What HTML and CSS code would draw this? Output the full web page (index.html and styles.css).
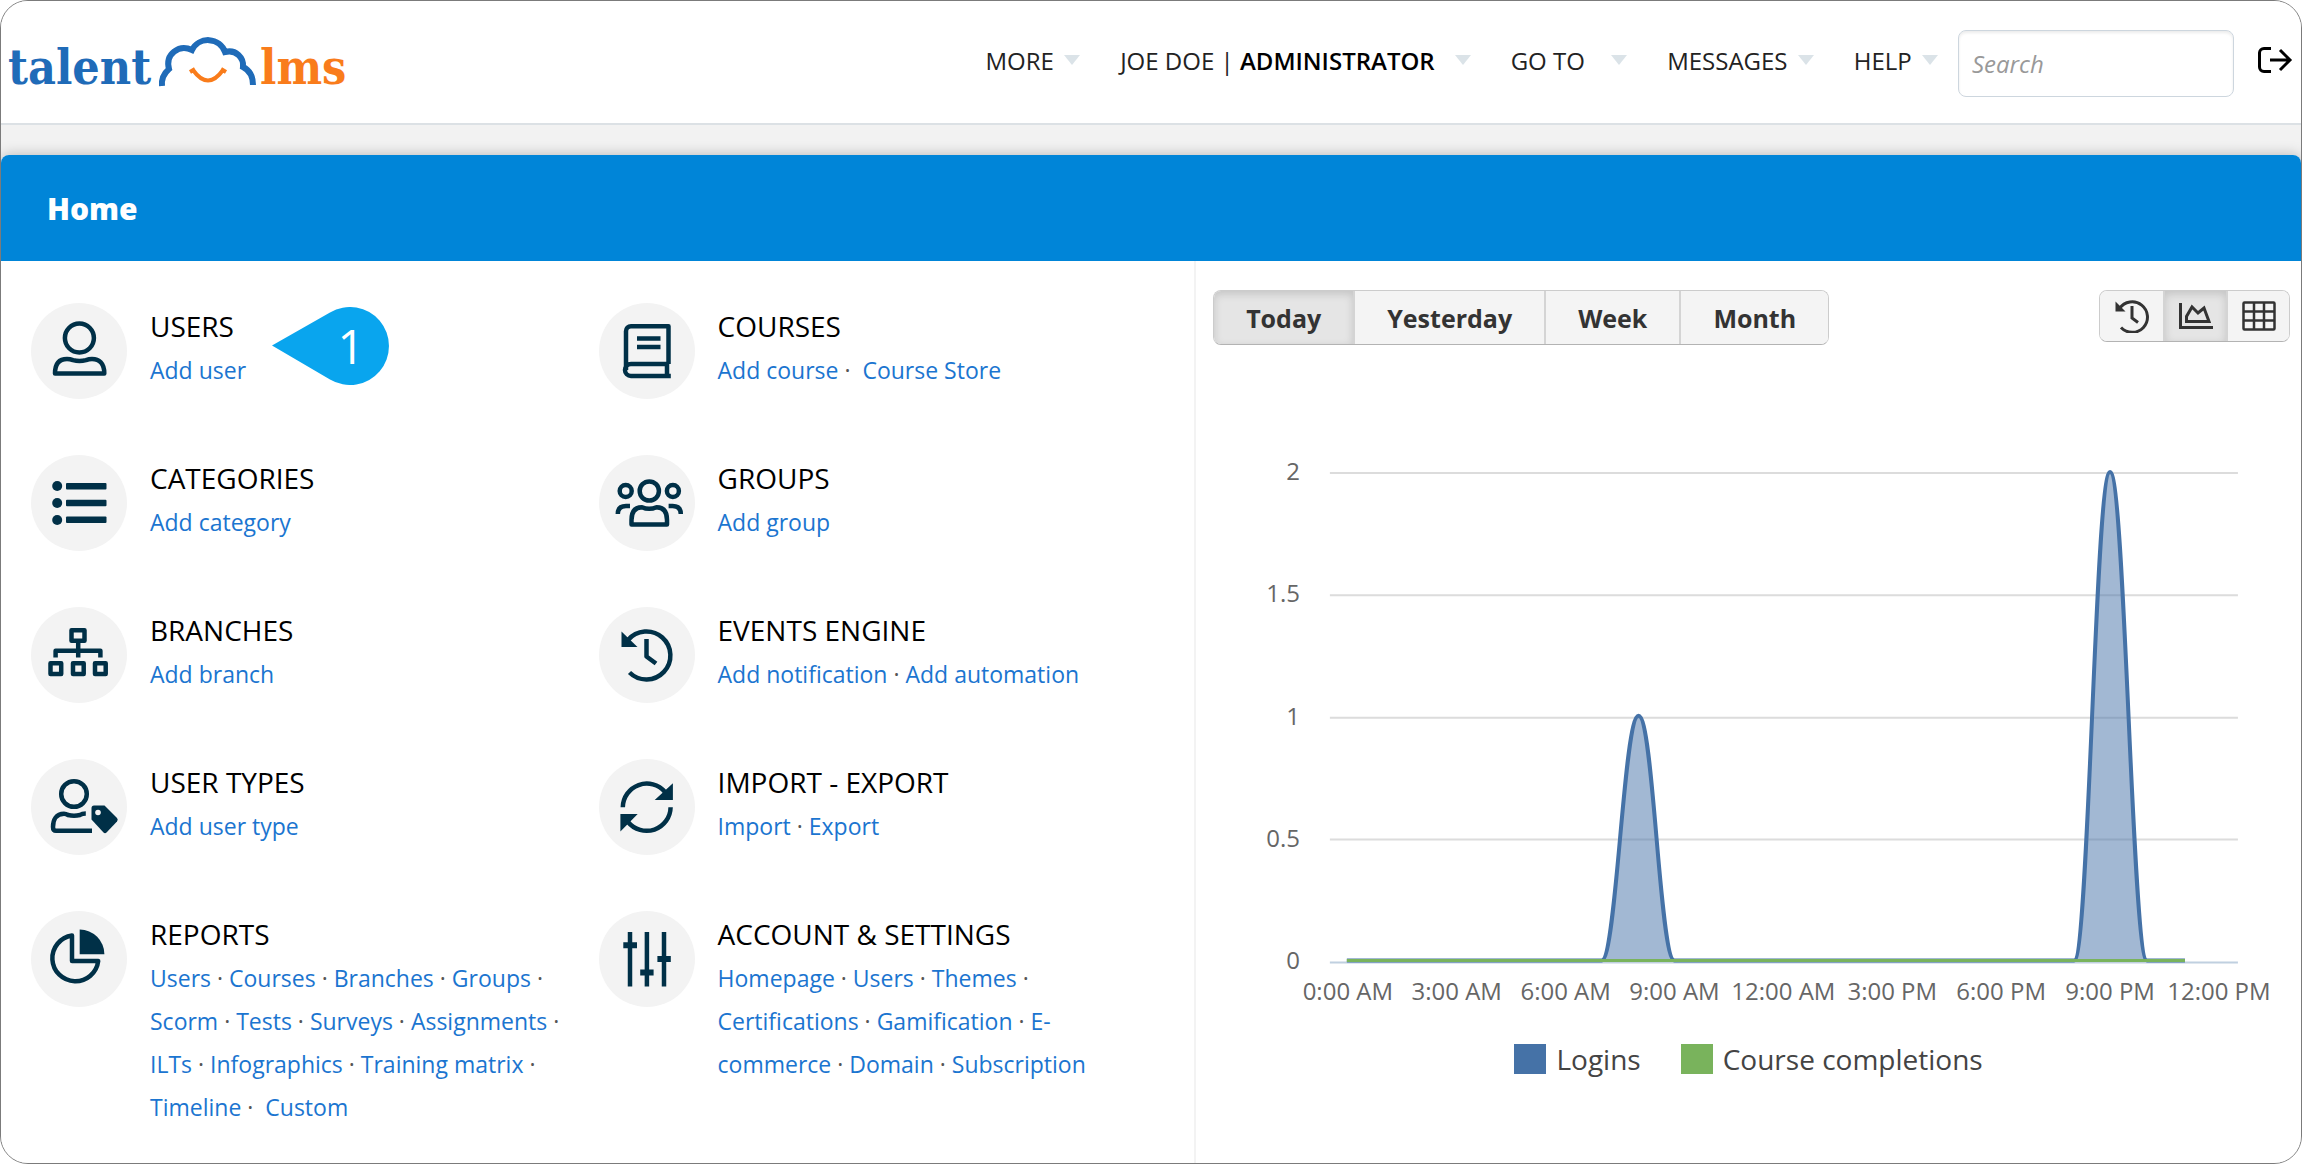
FILE: index.html
```html
<!DOCTYPE html>
<html lang="en">
  <head>
    <meta charset="utf-8" />
    <title>Home | TalentLMS</title>
    <link rel="stylesheet" href="styles.css">
  </head>
  <body>
    <div class="page">
      <header class="topbar">
        <a href="#" class="logo" aria-label="talentlms">
          <svg viewBox="0 -8 360 72" width="360" height="72">
            <text class="logo-talent" x="0" y="52">talent</text>
            <path d="M154 54Q153 44 161 37C157 22 171 12 184 18A18 18 0 0 1 217 20C228 17 236 26 235 35Q245 40 245 53" fill="none" stroke="#1f6bb8" stroke-width="6" />
            <path d="M182 40l5-3M218 40l-5-3M185 38Q200 59 215 38" fill="none" stroke="#f97c1b" stroke-width="4" />
            <text class="logo-lms" x="252" y="52">lms</text>
          </svg>
        </a>
        <nav class="menu">
          <a href="#">MORE <i class="caret"></i></a>
          <a href="#" class="wide">JOE DOE | <b>ADMINISTRATOR</b> <i class="caret"></i></a>
          <a href="#" class="wide">GO TO <i class="caret"></i></a>
          <a href="#">MESSAGES <i class="caret"></i></a>
          <a href="#">HELP <i class="caret"></i></a>
        </nav>
        <input type="search" class="search" placeholder="Search" aria-label="Search" />
        <a href="#" class="logout" aria-label="Logout">
          <svg viewBox="0 0 36 28" width="36" height="28" fill="none" stroke="#000" stroke-width="3">
            <path d="M14 2.500H7a4.500 4.500 0 0 0-4.500 4.500v14A4.500 4.500 0 0 0 7 25.500h7" />
            <path d="M13 14h20M23 4l10 10-10 10" />
          </svg>
        </a>
      </header>

      <main class="content">
        <h1 class="title">Home</h1>
        <div class="columns">
          <section class="tiles">
            <div class="tile">
              <svg class="icon" viewBox="0 0 96 96">
                <circle cx="48.400" cy="35" r="14.500" />
                <path d="M24 70.500C24 60 29 56 36 56Q39 56 42 57.200Q48.500 59 55 57.200Q58 56 61 56C68 56 73.300 60 73.300 70.500Z" />
              </svg>
              <div class="tile-text">
                <h2>USERS</h2>
                <p><a href="#">Add user</a></p>
              </div>
              <div class="marker">
                <svg viewBox="0 0 118 78" width="118" height="78">
                  <path d="M0 38.500 L58 5.500 A39 39 0 1 1 58 72.500 Z" fill="#09a5ee" />
                </svg>
                <span>1</span>
              </div>
            </div>

            <div class="tile">
              <svg class="icon" viewBox="0 0 96 96">
                <path d="M69.500 61V23.200H32a5 5 0 0 0-5 5V67M71.800 73H32a6 6 0 0 1 0-12H69.500M68 61v12M38 35.500h23.500M38 44h23.500" />
              </svg>
              <div class="tile-text">
                <h2>COURSES</h2>
                <p><a href="#">Add course</a> · &nbsp;<a href="#">Course Store</a></p>
              </div>
            </div>

            <div class="tile">
              <svg class="icon" viewBox="0 0 96 96">
                <g class="solid">
                  <circle cx="26.200" cy="31" r="5" /><circle cx="26.200" cy="48" r="5" /><circle cx="26.200" cy="65" r="5" />
                  <rect x="35" y="28" width="40.500" height="6.500" rx="1" /><rect x="35" y="44.800" width="40.500" height="6.500" rx="1" /><rect x="35" y="61.600" width="40.500" height="6.500" rx="1" />
                </g>
              </svg>
              <div class="tile-text">
                <h2>CATEGORIES</h2>
                <p><a href="#">Add category</a></p>
              </div>
            </div>

            <div class="tile">
              <svg class="icon" viewBox="0 0 96 96">
                <circle cx="50.300" cy="36" r="9.600" />
                <circle cx="26.700" cy="36" r="6" />
                <circle cx="73.900" cy="36" r="6" />
                <path d="M32.500 69.500V65Q32.500 52.200 43 52.200Q50 55.500 57.500 52.200Q68 52.200 68 65V69.500Z" />
                <path d="M18.800 59Q18.800 51 27 51H31M81.800 59Q81.800 51 73.600 51H69.600" />
              </svg>
              <div class="tile-text">
                <h2>GROUPS</h2>
                <p><a href="#">Add group</a></p>
              </div>
            </div>

            <div class="tile">
              <svg class="icon" viewBox="0 0 96 96">
                <rect x="40.500" y="23.200" width="13" height="10.500" />
                <path d="M47.200 34v16.500M24.600 50.500V43.800H69.400V50.500" />
                <rect x="19.500" y="56.200" width="10.700" height="10.700" />
                <rect x="42" y="56.200" width="10.700" height="10.700" />
                <rect x="64" y="56.200" width="10.700" height="10.700" />
              </svg>
              <div class="tile-text">
                <h2>BRANCHES</h2>
                <p><a href="#">Add branch</a></p>
              </div>
            </div>

            <div class="tile">
              <svg class="icon" viewBox="0 0 96 96">
                <path d="M30.500 65.500A24 24 0 1 0 29 33" />
                <path d="M47.500 32V49.500L57 56.500" />
                <path class="solid" d="M22.500 24.600V40H38.500Z" />
              </svg>
              <div class="tile-text">
                <h2>EVENTS ENGINE</h2>
                <p><a href="#">Add notification</a> · <a href="#">Add automation</a></p>
              </div>
            </div>

            <div class="tile">
              <svg class="icon" viewBox="0 0 96 96">
                <circle cx="43" cy="35" r="12.800" />
                <path d="M54.800 54.500Q51 54.500 49 56Q43 57.500 37 56Q35 54.800 33 54.800C25 54.800 22 61 22 68Q22 71.800 25 71.800H61" />
                <path class="solid" d="M60.500 49a2.500 2.500 0 0 1 2.500-2.500h10.500L86 59q1.500 1.700 0 3.400L75.500 73.500q-1.500 1.500-3 0L60.500 60.500Z" />
                <circle class="hole" cx="67" cy="53.500" r="2.800" />
              </svg>
              <div class="tile-text">
                <h2>USER TYPES</h2>
                <p><a href="#">Add user type</a></p>
              </div>
            </div>

            <div class="tile">
              <svg class="icon" viewBox="0 0 96 96">
                <path d="M23.800 48.200A24 24 0 0 1 66 33M71.600 48.200A24 24 0 0 1 29 63" />
                <path class="solid" d="M73.900 24.300V41H55.700ZM21.400 55H38.700L21.400 72.500Z" />
              </svg>
              <div class="tile-text">
                <h2>IMPORT - EXPORT</h2>
                <p><a href="#">Import</a> · <a href="#">Export</a></p>
              </div>
            </div>

            <div class="tile">
              <svg class="icon" viewBox="0 0 96 96">
                <path d="M41 24.500A23 23 0 1 0 67.200 50H41Z" />
                <path class="solid" d="M48.700 43.200V18.600A24.600 24.600 0 0 1 73.400 43.200Z" />
              </svg>
              <div class="tile-text">
                <h2>REPORTS</h2>
                <p>
                  <a href="#">Users</a> · <a href="#">Courses</a> · <a href="#">Branches</a> · <a href="#">Groups</a> ·
                  <a href="#">Scorm</a> · <a href="#">Tests</a> · <a href="#">Surveys</a> · <a href="#">Assignments</a> ·
                  <a href="#">ILTs</a> · <a href="#">Infographics</a> · <a href="#">Training matrix</a> ·
                  <a href="#">Timeline</a> · &nbsp;<a href="#">Custom</a>
                </p>
              </div>
            </div>

            <div class="tile">
              <svg class="icon" viewBox="0 0 96 96">
                <path d="M31 21V75.400M47.900 21V75.400M65 21V75.400" />
                <path d="M24.300 34.300H38M41.200 61.500H54.600M58.400 47.900H71.800" stroke-width="6" />
              </svg>
              <div class="tile-text">
                <h2>ACCOUNT &amp; SETTINGS</h2>
                <p>
                  <a href="#">Homepage</a> · <a href="#">Users</a> · <a href="#">Themes</a> ·
                  <a href="#">Certifications</a> · <a href="#">Gamification</a> · <a href="#">E-commerce</a> ·
                  <a href="#">Domain</a> · <a href="#">Subscription</a>
                </p>
              </div>
            </div>
          </section>

          <section class="stats">
            <div class="toolbar">
              <div class="group">
                <button type="button" class="active">Today</button>
                <button type="button">Yesterday</button>
                <button type="button">Week</button>
                <button type="button">Month</button>
              </div>
              <div class="group icons">
                <button type="button" aria-label="Timeline">
                  <svg viewBox="0 0 34 34" width="34" height="34" fill="none" stroke="#333" stroke-width="3">
                    <path d="M6 28.500A15.300 15.300 0 1 0 4.500 9.500" />
                    <path d="M17 7v12l6 4.500" />
                    <path d="M0.500 2.500V12.500H10.500Z" fill="#333" stroke="none" />
                  </svg>
                </button>
                <button type="button" class="active" aria-label="Chart">
                  <svg viewBox="0 0 34 26" width="34" height="26" fill="none" stroke="#333" stroke-width="3">
                    <path d="M1.500 0V24.500H34" />
                    <path d="M7.500 18.500V13.500L13 4l6 6 6-5 5 13.500Z" />
                  </svg>
                </button>
                <button type="button" aria-label="Table">
                  <svg viewBox="0 0 34 30" width="34" height="30" fill="none" stroke="#333" stroke-width="2.500">
                    <rect x="1.500" y="1.500" width="31" height="27" rx="1" />
                    <path d="M12 1.500v27M22 1.500v27M1.500 10.500h31M1.500 19.500h31" />
                  </svg>
                </button>
              </div>
            </div>

            <svg class="chart" viewBox="0 0 1106 600">
              <g class="grid">
                <path d="M134 33H1043M134 155.500H1043M134 278H1043M134 400H1043" />
                <path class="axis" d="M134 523H1043" />
              </g>
              <g class="logins">
                <path class="area" d="M406 521C421 521 428 276 443 276S464 521 479 521ZM879 521C894 521 900 32 915 32S937 521 952 521Z" />
                <path class="line" d="M151 521H406C421 521 428 276 443 276S464 521 479 521H879C894 521 900 32 915 32S937 521 952 521H990" />
              </g>
              <path class="completions" d="M151 521H990" />
              <g class="labels-y">
                <text x="104" y="40">2</text>
                <text x="104" y="162">1.5</text>
                <text x="104" y="285">1</text>
                <text x="104" y="407">0.5</text>
                <text x="104" y="530">0</text>
              </g>
              <g class="labels-x">
                <text x="152" y="561">0:00 AM</text>
                <text x="261" y="561">3:00 AM</text>
                <text x="370" y="561">6:00 AM</text>
                <text x="479" y="561">9:00 AM</text>
                <text x="588" y="561">12:00 AM</text>
                <text x="697" y="561">3:00 PM</text>
                <text x="806" y="561">6:00 PM</text>
                <text x="915" y="561">9:00 PM</text>
                <text x="1024" y="561">12:00 PM</text>
              </g>
            </svg>

            <div class="legend">
              <span><i class="swatch blue"></i>Logins</span>
              <span><i class="swatch green"></i>Course completions</span>
            </div>
          </section>
        </div>
      </main>
    </div>
  </body>
</html>
```
FILE: styles.css
```css
* {
  box-sizing: border-box;
}

body {
  margin: 0;
  background: #fff;
  font-family: "Open Sans", sans-serif;
  font-size: 24px;
  color: #000;
}

a {
  color: #1b75d0;
  text-decoration: none;
}

.page {
  display: flex;
  flex-direction: column;
  min-height: 100vh;
  border: 1px solid #7b7b7b;
  border-radius: 28px;
  background: #f2f2f2;
  overflow: hidden;
}

/* top bar */
.topbar {
  display: flex;
  align-items: center;
  height: 124px;
  padding: 0 8px 4px 7px;
  background: #fff;
  border-bottom: 2px solid #dce1e5;
}

.logo svg {
  display: block;
}

.logo-talent,
.logo-lms {
  font-family: "DejaVu Serif Condensed", "DejaVu Serif", serif;
  font-size: 48px;
  font-weight: bold;
  fill: #1f6bb8;
}

.logo-lms {
  fill: #f97c1b;
}

.menu {
  display: flex;
  gap: 40px;
  margin-left: auto;
}

.menu a {
  display: flex;
  align-items: center;
  white-space: pre;
  color: #222;
}

.menu b {
  font-weight: 600;
  color: #000;
}

.caret {
  margin-left: 4px;
  border: 8px solid transparent;
  border-top: 10px solid #dbe3e8;
  border-bottom: 0;
}

.menu .wide .caret {
  margin-left: 20px;
}

.search {
  width: 276px;
  height: 67px;
  margin: 7px 23px 0 20px;
  padding: 0 13px;
  border: 1px solid #cdd6de;
  border-radius: 8px;
  background: #fff;
  box-shadow: inset 0 2px 3px rgba(0, 0, 0, 0.08);
  font: inherit;
}

.search::placeholder {
  color: #999;
  font-style: italic;
}

.logout svg {
  display: block;
}

/* content */
.content {
  display: flex;
  flex-direction: column;
  flex: 1;
  margin-top: 30px;
  border-radius: 8px 8px 0 0;
  background: #fff;
  box-shadow: 0 0 14px rgba(0, 0, 0, 0.25);
}

.title {
  margin: 0;
  padding: 2px 46px 0;
  border-radius: 8px 8px 0 0;
  background: #0085d8;
  color: #fff;
  font-size: 30px;
  font-weight: 800;
  line-height: 104px;
}

.columns {
  display: grid;
  grid-template-columns: 83fr 77fr;
  flex: 1;
}

.tiles {
  display: grid;
  grid-template-columns: 1fr 1fr;
  grid-template-rows: repeat(4, 152px) auto;
  align-content: start;
  padding: 42px 28px 0 30px;
}

.tile {
  position: relative;
  display: flex;
  align-items: flex-start;
  gap: 23px;
  padding-right: 26px;
}

.icon {
  flex: none;
  width: 96px;
  height: 96px;
  border-radius: 50%;
  background: #f3f3f3;
  fill: none;
  stroke: #003047;
  stroke-width: 4.5;
  stroke-linejoin: round;
}

.icon .solid {
  fill: #003047;
  stroke: none;
}

.icon .hole {
  fill: #f3f3f3;
  stroke: none;
}

.tile h2 {
  margin: 0;
  font-size: 28px;
  font-weight: 500;
  line-height: 46px;
}

.tile p {
  margin: 0;
  color: #555;
  font-size: 23px;
  line-height: 43px;
}

.marker {
  position: absolute;
  left: 241px;
  top: 4px;
}

.marker svg {
  display: block;
}

.marker span {
  position: absolute;
  inset: 0 0 0 40px;
  color: #fff;
  font-size: 47px;
  line-height: 78px;
  text-align: center;
}

/* stats */
.stats {
  border-left: 2px solid #f3f3f3;
}

.toolbar {
  display: flex;
  justify-content: space-between;
  align-items: flex-start;
  padding: 29px 11px 0 17px;
}

.group {
  display: flex;
  border: 1px solid #ccc;
  border-bottom-color: #b3b3b3;
  border-radius: 8px;
  overflow: hidden;
}

.group button {
  height: 53px;
  padding: 0 32px;
  border: 0;
  border-left: 2px solid #d4d4d4;
  background: #f4f4f4;
  color: #333;
  font: 700 25px "Open Sans", sans-serif;
}

.group button:first-child {
  border-left: 0;
}

.group button.active {
  background: #e5e5e5;
  box-shadow: inset 0 3px 8px rgba(0, 0, 0, 0.15);
}

.group.icons button {
  display: grid;
  place-items: center;
  width: 63px;
  height: 50px;
  padding: 0;
}

.chart {
  display: block;
  width: 100%;
  margin-top: 95px;
}

.chart text {
  font-size: 24px;
  fill: #666;
}

.chart path {
  fill: none;
}

.grid path {
  stroke: #dcdcdc;
  stroke-width: 2;
}

.grid .axis {
  stroke: #c0d0e0;
}

.logins .area {
  fill: #4572a7;
  fill-opacity: 0.5;
}

.logins .line {
  stroke: #4572a7;
  stroke-width: 4;
}

.chart .completions {
  stroke: #79b35c;
  stroke-width: 3;
}

.labels-y {
  text-anchor: end;
}

.labels-x {
  text-anchor: middle;
}

.legend {
  display: flex;
  justify-content: center;
  gap: 40px;
  color: #444;
  font-size: 28px;
  line-height: 40px;
}

.legend span {
  display: flex;
  align-items: center;
  gap: 10px;
}

.swatch {
  width: 32px;
  height: 30px;
}

.blue {
  background: #4572a7;
}

.green {
  background: #79b35c;
}
```
